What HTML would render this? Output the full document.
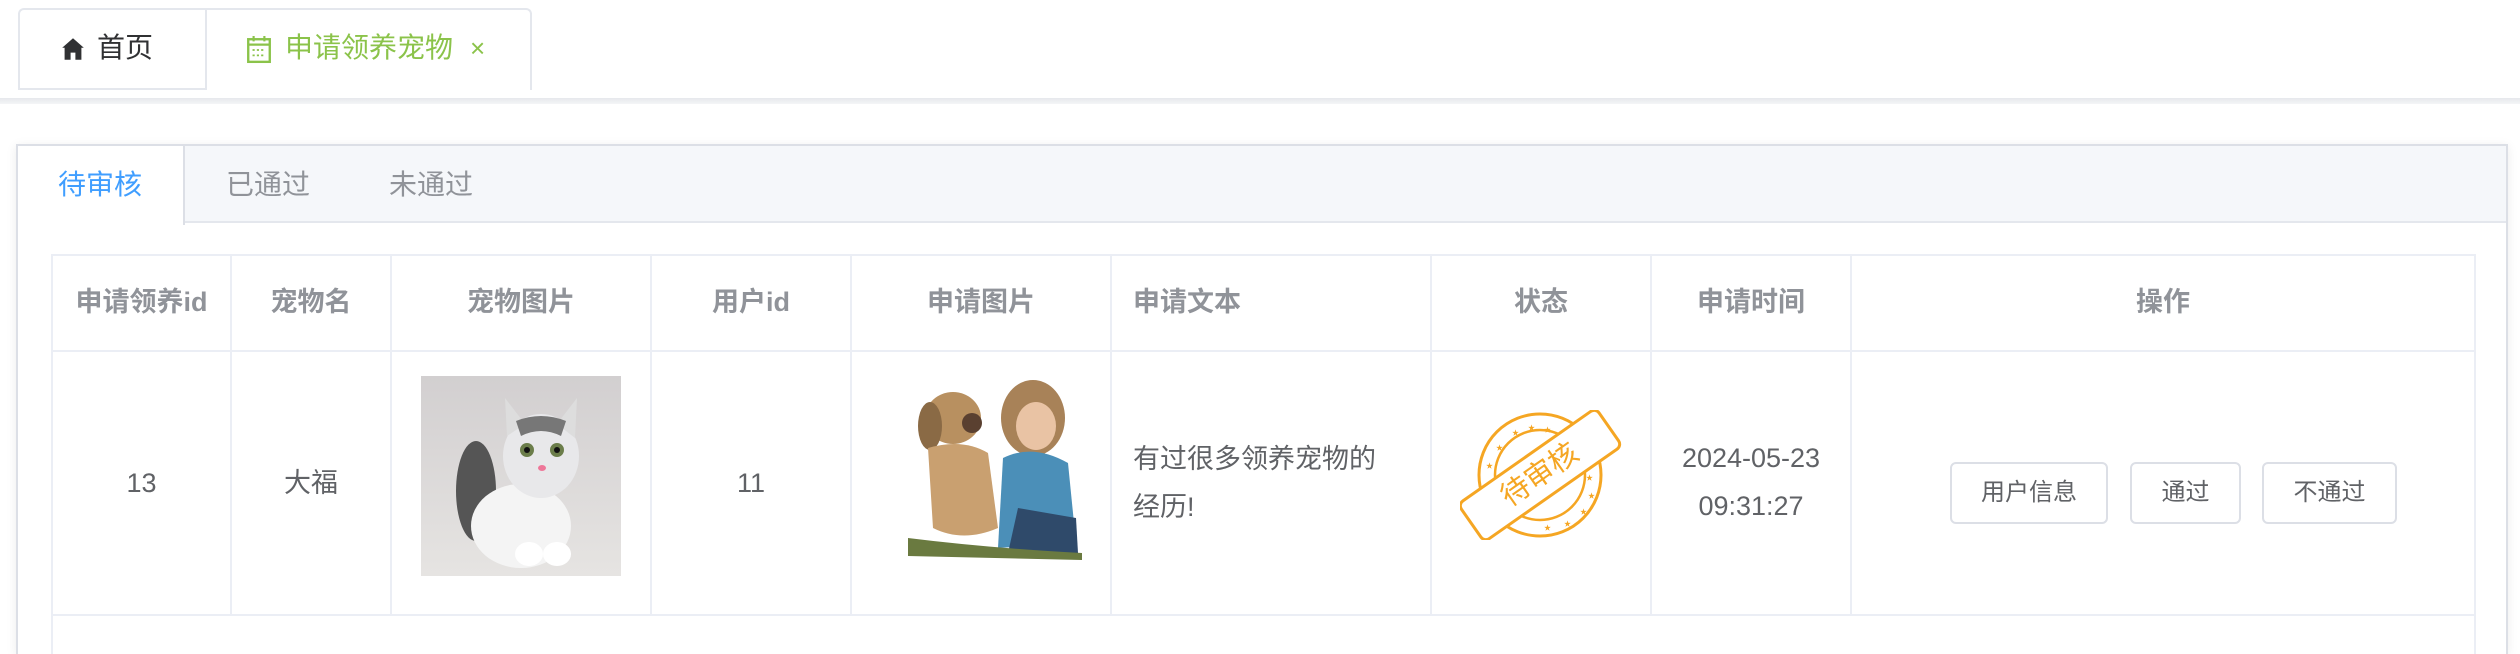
<!DOCTYPE html>
<html style="width:2520px;height:654px;overflow:hidden"><head><meta charset="utf-8"><style>
*{margin:0;padding:0;box-sizing:border-box}
body{width:2520px;height:654px;background:#fff;position:relative;overflow:hidden;font-family:"Liberation Sans","Noto Sans CJK SC",sans-serif;}
.abs{position:absolute}
.vl{position:absolute;width:2px;background:#ebeef5}
.hl{position:absolute;height:2px;background:#ebeef5}
.th{position:absolute;top:255px;height:95px;line-height:95px;text-align:center;font-size:27px;font-weight:bold;color:#909399}
.td{position:absolute;top:352px;height:262px;line-height:262px;text-align:center;font-size:27px;color:#606266}
.btn{position:absolute;top:462px;height:62px;line-height:58px;border:2px solid #dcdfe6;border-radius:6px;text-align:center;font-size:24px;color:#606266;background:#fff}
</style></head><body>
<!-- top tab bar -->
<div class="abs" style="left:0;top:98px;width:2520px;height:6px;background:linear-gradient(#e6e8ec,#f4f5f7)"></div>
<div class="abs" style="left:18px;top:8px;width:188px;height:82px;border:2px solid #e4e7ed;border-right:none;border-radius:6px 0 0 0;background:#fff"></div>
<div class="abs" style="left:205px;top:8px;width:327px;height:82px;border:2px solid #e4e7ed;border-bottom:none;border-radius:0 6px 0 0;background:#fff"></div>
<svg class="abs" style="left:61px;top:37px" width="24" height="24" viewBox="0 0 20 20"><path d="M10 1 L19 9 L17 9 L17 19 L12 19 L12 13 L8 13 L8 19 L3 19 L3 9 L1 9 Z" fill="#303133"/></svg>
<div class="abs" style="left:97px;top:28px;font-size:28px;color:#303133;line-height:40px">首页</div>
<svg class="abs" style="left:246px;top:36px" width="26" height="28" viewBox="0 0 24 26"><rect x="2" y="3" width="20" height="21" fill="none" stroke="#8bc34a" stroke-width="2.2"/><line x1="2" y1="8" x2="22" y2="8" stroke="#8bc34a" stroke-width="2"/><line x1="7" y1="0" x2="7" y2="5" stroke="#8bc34a" stroke-width="2"/><line x1="17" y1="0" x2="17" y2="5" stroke="#8bc34a" stroke-width="2"/><path d="M6 13h12M6 18h12" stroke="#8bc34a" stroke-width="1.6" stroke-dasharray="2 2"/></svg>
<div class="abs" style="left:285px;top:28px;font-size:28px;color:#8bc34a;line-height:40px">申请领养宠物</div>
<div class="abs" style="left:470px;top:30px;font-size:26px;color:#8bc34a;line-height:36px">×</div>

<!-- card -->
<div class="abs" style="left:16px;top:144px;width:2492px;height:510px;border:2px solid #dcdfe6;border-bottom:none;box-shadow:0 2px 10px rgba(0,0,0,.08)"></div>
<div class="abs" style="left:18px;top:146px;width:2488px;height:77px;background:#f5f7fa;border-bottom:2px solid #e4e7ed"></div>
<div class="abs" style="left:18px;top:146px;width:167px;height:79px;background:#fff;border-right:2px solid #dcdfe6"></div>
<div class="abs" style="left:58px;top:165px;font-size:28px;color:#409eff;line-height:40px">待审核</div>
<div class="abs" style="left:226px;top:165px;font-size:28px;color:#909399;line-height:40px">已通过</div>
<div class="abs" style="left:389px;top:165px;font-size:28px;color:#909399;line-height:40px">未通过</div>

<!-- table -->
<div class="hl" style="left:51px;top:254px;width:2425px"></div>
<div class="hl" style="left:51px;top:350px;width:2425px"></div>
<div class="hl" style="left:51px;top:614px;width:2425px"></div>
<div class="vl" style="left:51px;top:254px;height:400px"></div>
<div class="vl" style="left:2474px;top:254px;height:400px"></div>
<div class="vl" style="left:230px;top:254px;height:362px"></div>
<div class="vl" style="left:390px;top:254px;height:362px"></div>
<div class="vl" style="left:650px;top:254px;height:362px"></div>
<div class="vl" style="left:850px;top:254px;height:362px"></div>
<div class="vl" style="left:1110px;top:254px;height:362px"></div>
<div class="vl" style="left:1430px;top:254px;height:362px"></div>
<div class="vl" style="left:1650px;top:254px;height:362px"></div>
<div class="vl" style="left:1850px;top:254px;height:362px"></div>

<div class="th" style="left:53px;width:177px">申请领养id</div>
<div class="th" style="left:232px;width:158px">宠物名</div>
<div class="th" style="left:392px;width:258px">宠物图片</div>
<div class="th" style="left:652px;width:198px">用户id</div>
<div class="th" style="left:852px;width:258px">申请图片</div>
<div class="th" style="left:1133px;width:297px;text-align:left">申请文本</div>
<div class="th" style="left:1432px;width:218px">状态</div>
<div class="th" style="left:1652px;width:198px">申请时间</div>
<div class="th" style="left:1852px;width:622px">操作</div>

<div class="td" style="left:53px;width:177px">13</div>
<div class="td" style="left:232px;width:158px">大福</div>
<div class="td" style="left:652px;width:198px">11</div>

<!-- cat image -->
<svg class="abs" style="left:421px;top:376px" width="200" height="200" viewBox="0 0 200 200">
<defs><linearGradient id="bg" x1="0" y1="0" x2="0" y2="1"><stop offset="0" stop-color="#d2cfd0"/><stop offset="1" stop-color="#e6e4e2"/></linearGradient></defs>
<rect width="200" height="200" fill="url(#bg)"/>
<ellipse cx="55" cy="115" rx="20" ry="50" fill="#555"/>
<ellipse cx="100" cy="150" rx="50" ry="42" fill="#f4f4f4"/>
<ellipse cx="120" cy="80" rx="38" ry="42" fill="#e8e8ea"/>
<path d="M86 60 L84 22 L104 48Z M136 48 L156 22 L154 62Z" fill="#ddd"/>
<path d="M95 45 Q120 35 145 45 L140 60 Q120 50 100 60Z" fill="#777"/>
<circle cx="106" cy="74" r="7" fill="#6b7d4a"/><circle cx="136" cy="74" r="7" fill="#6b7d4a"/>
<circle cx="106" cy="74" r="3" fill="#111"/><circle cx="136" cy="74" r="3" fill="#111"/>
<ellipse cx="121" cy="92" rx="4" ry="3" fill="#e79"/>
<ellipse cx="108" cy="178" rx="14" ry="12" fill="#fff"/><ellipse cx="136" cy="178" rx="14" ry="12" fill="#fff"/>
</svg>
<!-- dog & girl image -->
<svg class="abs" style="left:908px;top:378px" width="174" height="182" viewBox="0 0 174 182">
<ellipse cx="125" cy="40" rx="32" ry="38" fill="#a88258"/>
<ellipse cx="128" cy="48" rx="20" ry="24" fill="#e9c3a4"/>
<path d="M95 80 Q125 65 160 85 L168 165 L90 170Z" fill="#4b8fb8"/>
<path d="M110 130 L168 140 L170 175 L100 175Z" fill="#2f4a6a"/>
<ellipse cx="45" cy="40" rx="28" ry="26" fill="#b89060"/>
<ellipse cx="22" cy="48" rx="12" ry="24" fill="#8a6a45"/>
<ellipse cx="64" cy="45" rx="10" ry="10" fill="#5a4030"/>
<path d="M20 70 Q55 60 80 75 L90 150 Q55 165 25 150Z" fill="#c9a070"/>
<path d="M0 160 Q80 170 174 175 L174 182 L0 178Z" fill="#6a7a40"/>
</svg>

<div class="abs" style="left:1133px;top:435px;font-size:27px;color:#606266;line-height:48px;width:290px">有过很多领养宠物的<br>经历!</div>

<!-- stamp -->
<svg class="abs" style="left:1460px;top:410px" width="162" height="130" viewBox="0 0 162 130">
<g fill="none" stroke="#f5a623" stroke-width="3">
<circle cx="80" cy="65" r="61"/>
<circle cx="80" cy="65" r="45" stroke-width="2.5"/>
<g transform="rotate(-35 80 65)"><rect x="-4" y="42" width="168" height="46" rx="6" fill="#fff" stroke-width="3"/></g>
</g>
<g fill="#f5a623" font-size="7">
<text x="52" y="25">★</text><text x="68" y="20">★</text><text x="84" y="22">★</text><text x="36" y="40">★</text><text x="26" y="58">★</text>
<text x="128" y="88">★</text><text x="120" y="104">★</text><text x="104" y="116">★</text><text x="84" y="120">★</text><text x="126" y="70">★</text>
</g>
<text x="80" y="74" text-anchor="middle" font-size="29" fill="#f5a623" transform="rotate(-35 80 65)" font-family="Liberation Sans,Noto Sans CJK SC,sans-serif">待审核</text>
</svg>

<div class="abs" style="left:1652px;top:434px;width:198px;text-align:center;font-size:27px;color:#606266;line-height:48px">2024-05-23<br>09:31:27</div>

<div class="btn" style="left:1950px;width:158px">用户信息</div>
<div class="btn" style="left:2130px;width:111px">通过</div>
<div class="btn" style="left:2262px;width:135px">不通过</div>
</body></html>
